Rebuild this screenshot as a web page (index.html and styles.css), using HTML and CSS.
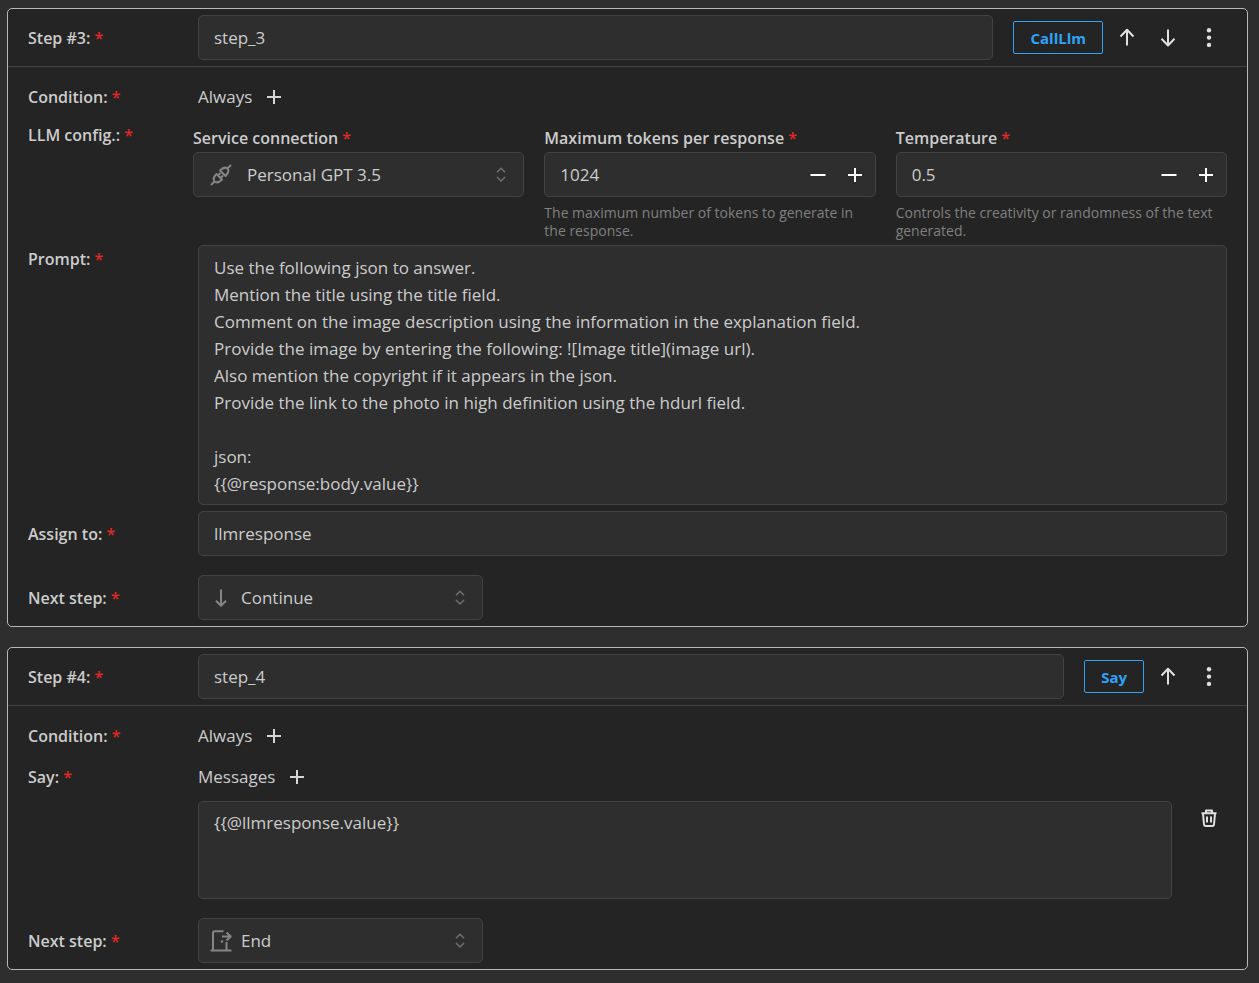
FILE: index.html
```html
<!DOCTYPE html>
<html lang="en">
<head>
<meta charset="utf-8">
<title>Flow steps</title>
<link rel="stylesheet" href="styles.css">
</head>
<body>
<svg class="sprite" aria-hidden="true">
  <symbol id="arrow-up" viewBox="0 0 20 20"><path d="M10 17.500V2M3.500 8.500L10 1.800L16.500 8.500"/></symbol>
  <symbol id="arrow-down" viewBox="0 0 20 20"><path d="M10 1.500V17M3.500 10.800L10 17.500L16.500 10.800"/></symbol>
  <symbol id="arrow-small" viewBox="0 0 22 22"><path d="M11 2.500V18.500M6 13.800L11 18.800L16 13.800"/></symbol>
  <symbol id="dots" viewBox="0 0 20 20"><g fill="currentColor" stroke="none"><circle cx="10" cy="2.300" r="2.200"/><circle cx="10" cy="9.600" r="2.200"/><circle cx="10" cy="16.900" r="2.200"/></g></symbol>
  <symbol id="plus" viewBox="0 0 20 20"><path d="M10 3V17M3 10H17"/></symbol>
  <symbol id="minus" viewBox="0 0 20 20"><path d="M2.500 10H17.500"/></symbol>
  <symbol id="chevrons" viewBox="0 0 20 20"><path d="M6 7.200L10 3.200L14 7.200M6 12L10 16L14 12"/></symbol>
  <symbol id="plug" viewBox="0 0 22 22"><path d="M1 21L4.500 17.500M4.500 17.500C2.500 15 3.500 13 6.500 10L12 15.500C9 18.500 7 19.500 4.500 17.500ZM8 11.500L10.500 9M10.500 14L13 11.500M17.500 4.500L21 1M17.500 4.500C19.500 7 18.500 9 15.500 12L10 6.500C13 3.500 15 2.500 17.500 4.500Z"/></symbol>
  <symbol id="door" viewBox="0 0 22 22"><path d="M0.500 20.500H8M3 20V3Q3 1.200 5 1.200H13.500M16.500 12V20.500M14.500 20.500H21.500M8 20.500H15M12 6.500H20M16.500 2.500L20.700 6.500L16.500 10.500"/><circle cx="12" cy="11.500" r="1.300" fill="currentColor" stroke="none"/></symbol>
  <symbol id="trash" viewBox="0 0 20 20"><path d="M2.500 5.200H17.500M7 5V2.500H13V5M4 5.500L5 16.500Q5.200 18 6.800 18H13.200Q14.800 18 15 16.500L16 5.500M8 8.500V14.500M12 8.500V14.500"/></symbol>
</svg>

<main class="steps">
  <section class="card">
    <header class="card-head">
      <label class="label" for="name3">Step #3: <span class="req">*</span></label>
      <input class="box field" id="name3" type="text" value="step_3">
      <div class="actions">
        <button class="tag" type="button">CallLlm</button>
        <button class="icon-btn" type="button" aria-label="Move up"><svg class="icon"><use href="#arrow-up"/></svg></button>
        <button class="icon-btn" type="button" aria-label="Move down"><svg class="icon"><use href="#arrow-down"/></svg></button>
        <button class="icon-btn" type="button" aria-label="More"><svg class="icon"><use href="#dots"/></svg></button>
      </div>
    </header>
    <div class="card-body">
      <div class="row">
        <span class="label">Condition: <span class="req">*</span></span>
        <div class="inline">Always <button class="add" type="button" aria-label="Add condition"><svg class="icon"><use href="#plus"/></svg></button></div>
      </div>
      <div class="row row-config">
        <span class="label">LLM config.: <span class="req">*</span></span>
        <div class="config">
          <div class="config-item">
            <label class="label" for="conn">Service connection <span class="req">*</span></label>
            <div class="picker">
              <select class="box field wide-icon" id="conn"><option>Personal GPT 3.5</option></select>
              <svg class="lead"><use href="#plug"/></svg>
              <svg class="chev"><use href="#chevrons"/></svg>
            </div>
          </div>
          <div class="config-item">
            <label class="label" for="tokens">Maximum tokens per response <span class="req">*</span></label>
            <div class="box number">
              <input class="number-input" id="tokens" type="text" inputmode="numeric" value="1024">
              <button class="step-btn" type="button" aria-label="Decrease"><svg class="icon"><use href="#minus"/></svg></button>
              <button class="step-btn" type="button" aria-label="Increase"><svg class="icon"><use href="#plus"/></svg></button>
            </div>
            <p class="help">The maximum number of tokens to generate in the response.</p>
          </div>
          <div class="config-item">
            <label class="label" for="temp">Temperature <span class="req">*</span></label>
            <div class="box number">
              <input class="number-input" id="temp" type="text" inputmode="decimal" value="0.5">
              <button class="step-btn" type="button" aria-label="Decrease"><svg class="icon"><use href="#minus"/></svg></button>
              <button class="step-btn" type="button" aria-label="Increase"><svg class="icon"><use href="#plus"/></svg></button>
            </div>
            <p class="help">Controls the creativity or randomness of the text generated.</p>
          </div>
        </div>
      </div>
      <div class="row row-prompt">
        <label class="label" for="prompt">Prompt: <span class="req">*</span></label>
        <textarea class="box area" id="prompt" rows="9">Use the following json to answer.
Mention the title using the title field.
Comment on the image description using the information in the explanation field.
Provide the image by entering the following: ![Image title](image url).
Also mention the copyright if it appears in the json.
Provide the link to the photo in high definition using the hdurl field.

json:
{{@response:body.value}}</textarea>
      </div>
      <div class="row row-assign">
        <label class="label" for="assign">Assign to: <span class="req">*</span></label>
        <input class="box field" id="assign" type="text" value="llmresponse">
      </div>
      <div class="row row-next">
        <label class="label" for="next3">Next step: <span class="req">*</span></label>
        <div class="picker picker-short">
          <select class="box field" id="next3"><option>Continue</option></select>
          <svg class="lead"><use href="#arrow-small"/></svg>
          <svg class="chev"><use href="#chevrons"/></svg>
        </div>
      </div>
    </div>
  </section>

  <section class="card">
    <header class="card-head">
      <label class="label" for="name4">Step #4: <span class="req">*</span></label>
      <input class="box field" id="name4" type="text" value="step_4">
      <div class="actions">
        <button class="tag" type="button">Say</button>
        <button class="icon-btn" type="button" aria-label="Move up"><svg class="icon"><use href="#arrow-up"/></svg></button>
        <button class="icon-btn" type="button" aria-label="More"><svg class="icon"><use href="#dots"/></svg></button>
      </div>
    </header>
    <div class="card-body">
      <div class="row">
        <span class="label">Condition: <span class="req">*</span></span>
        <div class="inline">Always <button class="add" type="button" aria-label="Add condition"><svg class="icon"><use href="#plus"/></svg></button></div>
      </div>
      <div class="row row-say">
        <label class="label" for="msg">Say: <span class="req">*</span></label>
        <div class="messages">
          <div class="inline">Messages <button class="add" type="button" aria-label="Add message"><svg class="icon"><use href="#plus"/></svg></button></div>
          <div class="message">
            <textarea class="box area" id="msg" rows="3">{{@llmresponse.value}}</textarea>
            <button class="icon-btn" type="button" aria-label="Delete message"><svg class="icon"><use href="#trash"/></svg></button>
          </div>
        </div>
      </div>
      <div class="row row-next">
        <label class="label" for="next4">Next step: <span class="req">*</span></label>
        <div class="picker picker-short">
          <select class="box field" id="next4"><option>End</option></select>
          <svg class="lead"><use href="#door"/></svg>
          <svg class="chev"><use href="#chevrons"/></svg>
        </div>
      </div>
    </div>
  </section>
</main>
</body>
</html>
```
FILE: styles.css
```css
* { box-sizing: border-box; }

body {
  margin: 0;
  background: #2e2e2e;
  color: #cccccc;
  font: 17px/24px "Open Sans", "Noto Sans", sans-serif;
}

input, select, textarea, button { font: inherit; color: inherit; }
button { padding: 0; border: 0; background: none; cursor: pointer; }
.sprite { position: absolute; width: 0; height: 0; }

svg {
  fill: none;
  stroke: currentColor;
  stroke-width: 2;
  stroke-linejoin: round;
}

.steps {
  display: flex;
  flex-direction: column;
  gap: 20px;
  padding: 8px 11px 12px 7px;
}

.card {
  border: 1px solid #b8b8b8;
  border-radius: 5px;
  background: #242424;
}

.card-head {
  display: grid;
  grid-template-columns: 170px 1fr auto;
  align-items: center;
  padding: 6px 18px 6px 20px;
  border-bottom: 1px solid #424242;
}

.card-body { padding: 18px 20px 6px; }

.row { display: grid; grid-template-columns: 170px 1fr; }
.row-config { grid-template-columns: 165px 1fr; margin-top: 14px; }
.row-prompt { margin-top: 5px; }
.row-prompt > .label { padding-top: 2px; }
.row-assign { margin-top: 6px; align-items: center; }
.row-next { margin-top: 19px; align-items: center; }
.row-say { margin-top: 17px; }

.label { font-weight: 600; font-size: 16px; }
.req { color: #e02828; }

.box {
  border: 1px solid #424242;
  border-radius: 5px;
  background: #2e2e2e;
  outline: 0;
}

.field { width: 100%; min-width: 0; height: 45px; padding: 0 15px; }
.area {
  display: block;
  width: 100%;
  padding: 8px 15px 7px;
  line-height: 27px;
  resize: none;
  overflow: hidden;
}

.actions { display: flex; align-items: center; padding-left: 20px; }
.tag {
  height: 33px;
  margin-right: 3px;
  padding: 0 16px;
  border: 1px solid #2ea3f7;
  border-radius: 2px;
  color: #2ea3f7;
  font-size: 15px;
  font-weight: 700;
}

.icon-btn {
  display: grid;
  place-items: center;
  width: 41px;
  height: 34px;
  color: #e0e0e0;
}
.icon { display: block; width: 20px; height: 20px; }

.inline { display: flex; align-items: center; gap: 12px; }
.add { color: #d6d6d6; }

.config {
  display: grid;
  grid-template-columns: repeat(3, 1fr);
  gap: 20px;
  padding-top: 2px;
}
.config-item { min-width: 0; }
.config-item .label { display: block; line-height: 27px; }

.picker { display: grid; align-items: center; }
.picker > * { grid-area: 1 / 1; }
.picker select { appearance: none; padding-left: 42px; }
.picker select.wide-icon { padding-left: 53px; }
.picker-short { width: 285px; }
.lead {
  width: 22px;
  height: 22px;
  margin-left: 12px;
  color: #858585;
  pointer-events: none;
}
.wide-icon + .lead { margin-left: 17px; }
.chev {
  justify-self: end;
  width: 20px;
  height: 20px;
  margin-right: 13px;
  color: #707070;
  stroke-width: 1.5;
  pointer-events: none;
}

.number { display: flex; align-items: center; height: 45px; padding: 0 10px 0 15px; }
.number-input { flex: 1; min-width: 0; padding: 0; border: 0; background: none; outline: 0; }
.step-btn { display: grid; place-items: center; width: 20px; height: 36px; color: #ffffff; }
.step-btn + .step-btn { margin-left: 17px; }

.help { margin: 7px 0 0; color: #808080; font-size: 14px; line-height: 18px; }

.message {
  display: grid;
  grid-template-columns: 1fr auto;
  column-gap: 16px;
  margin: 12px -2px 0 0;
}
.message .area { padding: 7px 15px 8px; }
```
